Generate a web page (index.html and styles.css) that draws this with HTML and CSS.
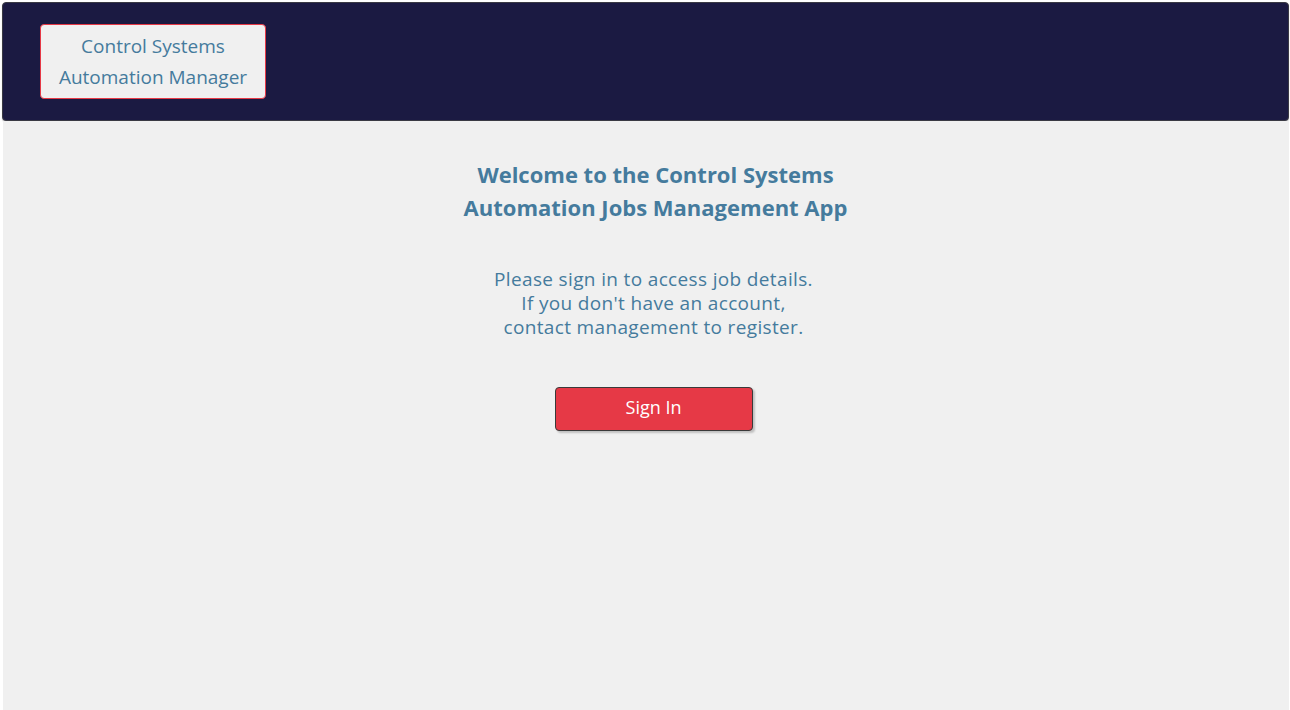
FILE: index.html
```html
<!DOCTYPE html>
<html lang="en">
<head>
<meta charset="utf-8">
<title>Control Systems Automation Manager</title>
<link rel="stylesheet" href="styles.css">
</head>
<body>
<div class="page">
  <header class="topbar">
    <div class="brand">Control Systems<br>Automation Manager</div>
  </header>
  <main class="content">
    <h1 class="title">Welcome to the Control Systems<br>Automation Jobs Management App</h1>
    <p class="intro">Please sign in to access job details.<br>If you don't have an account,<br>contact management to register.</p>
    <button class="signin" type="button">Sign In</button>
  </main>
</div>
</body>
</html>
```

FILE: styles.css
```css
html, body {
  margin: 0;
  padding: 0;
  background: #ffffff;
}
body {
  font-family: "Open Sans", "Noto Sans", sans-serif;
  color: #457b9d;
}
.page {
  width: 1290px;
  height: 710px;
  padding: 2px 1px 0 2px;
  box-sizing: border-box;
  display: flex;
  flex-direction: column;
}
.topbar {
  height: 119px;
  box-sizing: border-box;
  background: #1b1a42;
  border: 1px solid #3a3a44;
  border-radius: 4px;
  padding: 21px 0 0 37px;
  display: flex;
  align-items: flex-start;
  box-shadow: 0 1px 1px rgba(0,0,0,0.25);
}
.brand {
  width: 226px;
  height: 75px;
  box-sizing: border-box;
  background: #f0f0f0;
  border: 1.5px solid #e63946;
  border-radius: 4px;
  text-align: center;
  font-size: 19px;
  line-height: 31px;
  padding-top: 6px;
  color: #457b9d;
}
.content {
  flex: 1;
  margin: 0 0 0 1px;
  background: #f0f0f0;
  display: flex;
  flex-direction: column;
  align-items: center;
  padding-top: 37px;
  padding-left: 15px;
}
.title {
  margin: 0;
  font-size: 22px;
  line-height: 33px;
  font-weight: 700;
  text-align: center;
  color: #457b9d;
  padding-left: 4px;
}
.intro {
  margin: 43px 0 0;
  font-size: 19px;
  letter-spacing: 0.35px;
  line-height: 24px;
  text-align: center;
  color: #457b9d;
}
.signin {
  margin-top: 48px;
  width: 198px;
  height: 44px;
  background: #e63946;
  color: #ffffff;
  border: 1.5px solid #3a3a3a;
  border-radius: 4px;
  font-family: "Open Sans", "Noto Sans", sans-serif;
  font-size: 18px;
  padding: 0 0 4px;
  box-shadow: 2px 2px 2px rgba(0,0,0,0.2);
  cursor: pointer;
}
```
